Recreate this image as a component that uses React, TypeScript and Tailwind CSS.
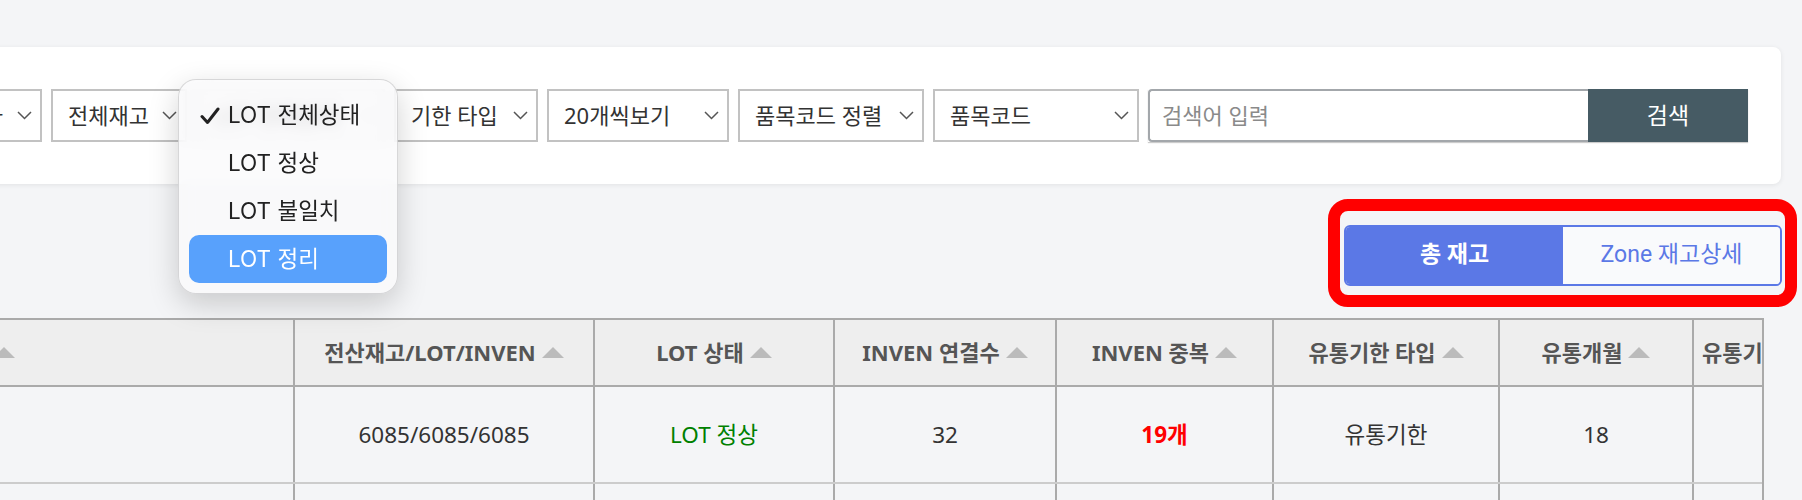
import React from "react";

const FONT = "font-['Noto_Sans','Noto_Sans_CJK_KR',sans-serif]";

function Chevron() {
  return (
    <svg width="15" height="9" viewBox="0 0 15 9" fill="none" className="shrink-0">
      <polyline points="1,1 7.5,7.5 14,1" stroke="#555" strokeWidth="1.5" />
    </svg>
  );
}

function SortArrow() {
  return (
    <svg width="22" height="11" viewBox="0 0 22 11" className="ml-[6px] inline-block shrink-0">
      <polygon points="11,0 22,11 0,11" fill="#bbbbbb" />
    </svg>
  );
}

function Select({ label, className }: { label: string; className: string }) {
  return (
    <div
      className={`flex h-[53px] shrink-0 items-center justify-between border-2 border-[#c2c2c2] bg-white pl-[15px] pr-[8px] text-[22px] text-[#333] ${className}`}
    >
      <span className="whitespace-nowrap">{label}</span>
      <Chevron />
    </div>
  );
}

function Th({ children, className = "" }: { children?: React.ReactNode; className?: string }) {
  return (
    <th
      className={`h-[67px] border-2 border-[#aaaaaa] bg-[#eeeeee] p-0 text-[22px] font-bold text-[#555] ${className}`}
    >
      <div className="flex items-center justify-center whitespace-nowrap">{children}</div>
    </th>
  );
}

function Td({ children, className = "" }: { children?: React.ReactNode; className?: string }) {
  return (
    <td
      className={`h-[97px] border-x-2 border-b-2 border-x-[#aaaaaa] border-b-[#cccccc] p-0 text-center text-[22.5px] text-[#333] ${className}`}
    >
      {children}
    </td>
  );
}

const menuItems = ["LOT 전체상태", "LOT 정상", "LOT 불일치", "LOT 정리"];

export default function App() {
  return (
    <div className={`relative h-[500px] w-full overflow-hidden bg-[#f4f5f7] ${FONT}`}>
      {/* 검색 필터 패널 */}
      <div className="pt-[47px]">
        <div className="ml-[-151px] mr-[21px] flex h-[137px] items-center rounded-[8px] bg-white pl-[30px] pr-[33px] shadow-[0_1px_5px_rgba(0,0,0,0.08)]">
          <div className="flex w-full items-center gap-[9px]">
            <Select label="전체 판매사" className="w-[163px]" />
            <Select label="전체재고" className="w-[136px]" />
            <Select label="LOT 전체상태" className="w-[189px]" />
            <Select label="기한 타입" className="w-[144px]" />
            <Select label="20개씩보기" className="w-[182px]" />
            <Select label="품목코드 정렬" className="w-[186px]" />
            <Select label="품목코드" className="w-[206px]" />
            <div className="flex h-[53px] flex-1 shadow-[0_1px_1px_rgba(0,0,0,0.2)]">
              <div className="flex flex-1 items-center rounded-l-[4px] border-2 border-r-0 border-[#a3a7ab] bg-white pl-[12px] text-[22px] text-[#8a8a8a]">
                검색어 입력
              </div>
              <button className="w-[160px] bg-[#465b64] text-[23px] text-white">검색</button>
            </div>
          </div>
        </div>
      </div>

      {/* 총 재고 / Zone 재고상세 토글 */}
      <div className="mt-[15px] flex justify-end pr-[5px]">
        <div className="h-[108px] w-[469px] rounded-[20px] border-[12px] border-[#ff0000] pb-[9px] pl-[4px] pr-[3px] pt-[14px]">
          <div className="flex h-[61px] w-[438px] overflow-hidden rounded-[6px] border-2 border-[#5b78e6] font-['Roboto','Noto_Sans_CJK_KR',sans-serif] text-[23px]">
            <div className="flex flex-1 items-center justify-center bg-[#5b78e6] font-bold text-white">총 재고</div>
            <div className="flex flex-1 items-center justify-center bg-[#f9fafc] text-[#5b78e6]">Zone 재고상세</div>
          </div>
        </div>
      </div>

      {/* 재고 테이블 */}
      <div className="mt-[11px] ml-[-354px] w-[2118px] overflow-hidden border-r-2 border-[#aaaaaa]">
        <table className="w-[2300px] table-fixed border-collapse">
          <colgroup>
            <col className="w-[647px]" />
            <col className="w-[300px]" />
            <col className="w-[240px]" />
            <col className="w-[222px]" />
            <col className="w-[217px]" />
            <col className="w-[226px]" />
            <col className="w-[194px]" />
            <col className="w-[254px]" />
          </colgroup>
          <thead>
            <tr>
              <Th>
                품목명
                <SortArrow />
              </Th>
              <Th>
                전산재고/LOT/INVEN
                <SortArrow />
              </Th>
              <Th>
                LOT 상태
                <SortArrow />
              </Th>
              <Th>
                INVEN 연결수
                <SortArrow />
              </Th>
              <Th>
                INVEN 중복
                <SortArrow />
              </Th>
              <Th>
                유통기한 타입
                <SortArrow />
              </Th>
              <Th>
                유통개월
                <SortArrow />
              </Th>
              <Th className="text-left">
                <span className="w-full pl-[8px] text-left">
                  유통기한
                </span>
              </Th>
            </tr>
          </thead>
          <tbody>
            <tr>
              <Td></Td>
              <Td>6085/6085/6085</Td>
              <Td className="text-[#008000]">LOT 정상</Td>
              <Td>32</Td>
              <Td className="font-bold text-[#ff0000]">19개</Td>
              <Td>유통기한</Td>
              <Td>18</Td>
              <Td></Td>
            </tr>
            <tr>
              <Td></Td>
              <Td>1200/1200/1200</Td>
              <Td className="text-[#008000]">LOT 정상</Td>
              <Td>8</Td>
              <Td>-</Td>
              <Td>유통기한</Td>
              <Td>12</Td>
              <Td></Td>
            </tr>
          </tbody>
        </table>
      </div>

      {/* LOT 상태 드롭다운 메뉴 */}
      <div className="absolute left-[178px] top-[79px] w-[220px] rounded-[18px] border border-[rgba(0,0,0,0.14)] bg-[rgba(250,250,251,0.78)] px-[10px] pb-[10px] pt-[11px] font-['Inter','Noto_Sans_CJK_KR',sans-serif] shadow-[0_10px_30px_rgba(0,0,0,0.18)] backdrop-blur-[8px]">
        {menuItems.map((item, i) => (
          <div
            key={item}
            className={`relative flex h-[48px] items-center rounded-[10px] pl-[39px] text-[22.5px] ${
              i === 3 ? "bg-[#58a1fc] text-white" : "text-[#222]"
            }`}
          >
            {i === 0 && (
              <svg width="20" height="18" viewBox="0 0 20 18" className="absolute left-[11px] top-[16px]">
                <path d="M2 9.5 L7.5 15.5 L18 2" fill="none" stroke="#222" strokeWidth="3" strokeLinecap="round" strokeLinejoin="round" />
              </svg>
            )}
            {item}
          </div>
        ))}
      </div>
    </div>
  );
}
